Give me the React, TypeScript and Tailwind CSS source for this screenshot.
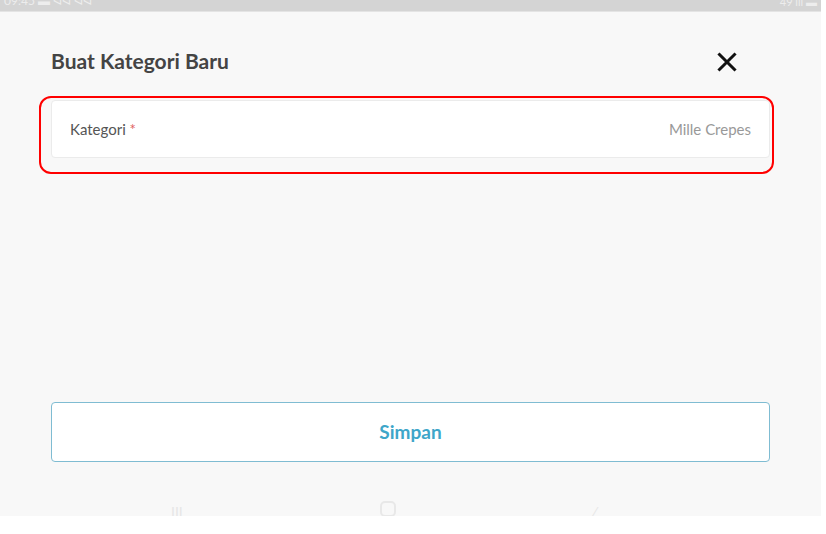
import React from "react";

export default function App() {
  const font = { fontFamily: "Lato, 'Open Sans', sans-serif" };
  return (
    <div className="w-[826px] h-[534px] bg-white overflow-hidden" style={font}>
      <div className="w-[821px] h-[516px] bg-[#f8f8f8] flex flex-col overflow-hidden">
        <div className="h-[12px] bg-[#d4d4d4] border-b border-[#e4e4e4] flex items-end justify-between px-[4px] overflow-hidden">
          <span className="text-[12px] leading-[12px] text-[#ededed] translate-y-[-4px]">09:45 ▬ ᐊᐊ ᐊᐊ</span>
          <span className="text-[11px] leading-[11px] text-[#ededed] translate-y-[-4px]">49 ıll ▬</span>
        </div>
        <div className="flex-1 flex flex-col px-[51px] relative">
          <div className="flex items-center justify-between mt-[38px] h-[22px] pr-[33px]">
            <h1 className="text-[21px] font-bold text-[#444444]">Buat Kategori Baru</h1>
            <svg width="20" height="20" viewBox="0 0 20 20" className="translate-y-[1px]">
              <path d="M2.5 2.5 L17.5 17.5 M17.5 2.5 L2.5 17.5" stroke="#111" strokeWidth="3" strokeLinecap="square" />
            </svg>
          </div>
          <div className="relative mt-[28px] w-[719px]">
            <div className="h-[58px] bg-white border border-[#ebebeb] rounded-[4px] flex items-center justify-between pl-[18px] pr-[18px]">
              <span className="text-[15px] text-[#555555]">
                Kategori <span className="text-[#e06060]">*</span>
              </span>
              <span className="text-[15px] text-[#999999]">Mille Crepes</span>
            </div>
            <div className="absolute left-[-12px] top-[-4px] w-[735px] h-[78px] border-2 border-[#ff0000] rounded-[12px] pointer-events-none" />
          </div>
          <button className="mt-[244px] w-[719px] h-[60px] bg-white border border-[#7fbcd2] rounded-[4px] text-[19px] font-bold text-[#3ea6c9]">
            Simpan
          </button>
          <div className="absolute left-0 right-0 bottom-[-6px] flex justify-between pl-[171px] pr-[225px] text-[#e6e6e6]">
            <span className="text-[14px]">III</span>
            <span className="w-[16px] h-[16px] border-2 border-[#e8e8e8] rounded-[5px]" />
            <span className="text-[14px]">⁄</span>
          </div>
        </div>
      </div>
    </div>
  );
}
